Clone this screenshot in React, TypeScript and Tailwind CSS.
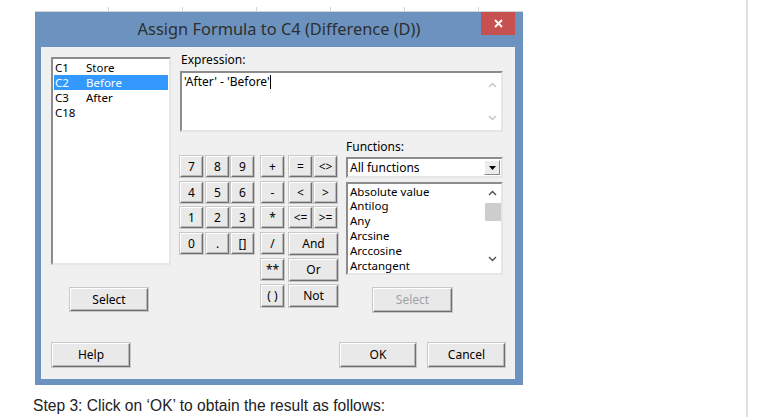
import React from 'react';

const ui = { fontFamily: '"Noto Sans", "Open Sans", sans-serif' };

const Btn: React.FC<{ label: string; className?: string; disabled?: boolean }> = ({ label, className = '', disabled }) => (
  <div
    className={`flex items-center justify-center bg-[#e9e9e9] border border-t-white border-l-white border-r-[#6e6e6e] border-b-[#6e6e6e] shadow-[inset_-1px_-1px_0_#b9b9b9,0_0_0_1px_#c8c8c8] text-[12px] leading-none ${
      disabled ? 'text-[#a3a3a3]' : 'text-black'
    } ${className}`}
  >
    {label}
  </div>
);

const Chevron: React.FC<{ up?: boolean; color?: string }> = ({ up, color = '#606060' }) => (
  <svg width="9" height="6" viewBox="0 0 9 6">
    <path d={up ? 'M1 5 L4.5 1.5 L8 5' : 'M1 1 L4.5 4.5 L8 1'} fill="none" stroke={color} strokeWidth="1.4" />
  </svg>
);

const sunken = 'border-2 border-t-[#8c8c8c] border-l-[#8c8c8c] border-r-[#e6e6e6] border-b-[#e6e6e6] bg-white';

export default function App() {
  const columns = [
    ['C1', 'Store'],
    ['C2', 'Before'],
    ['C3', 'After'],
    ['C18', ''],
  ];
  const functions = ['Absolute value', 'Antilog', 'Any', 'Arcsine', 'Arccosine', 'Arctangent'];

  return (
    <div className="w-[761px] h-[417px] bg-white flex overflow-hidden">
      <div className="w-[746px] flex flex-col pl-[33px] pt-[7px]">
        {/* table border above the picture */}
        <div className="ml-[2px] w-[488px] h-[5px] flex border-b border-[#d4d4d4]">
          {[0, 1, 2, 3, 4, 5].map((i) => (
            <div key={i} className="w-[74px] h-full border-r border-[#d4d4d4]" />
          ))}
        </div>

        {/* dialog */}
        <div className="ml-[2px] w-[488px] h-[373px] bg-[#6c93bf] flex flex-col">
          <div className="relative h-[35px] flex items-center justify-center">
            <span className="text-[16.4px] text-[#2e2e2e]" style={ui}>
              Assign Formula to C4 (Difference (D))
            </span>
            <div className="absolute right-[8px] top-0 w-[34px] h-[23px] bg-[#c75050] flex items-center justify-center">
              <svg width="9" height="9" viewBox="0 0 9 9">
                <path d="M1 1 L8 8 M8 1 L1 8" stroke="white" strokeWidth="1.8" />
              </svg>
            </div>
          </div>

          <div className="ml-[6px] w-[474px] h-[332px] bg-[#f0f0f0] flex flex-col text-black" style={ui}>
            <div className="flex">
              {/* left column list */}
              <div className="ml-[10px] mt-[10px] w-[120px] flex flex-col">
                <div className={`${sunken} h-[208px] pt-[1px] pl-px pr-px`}>
                  {columns.map(([c, n], i) => (
                    <div
                      key={c}
                      className={`h-[15px] flex items-center text-[11.5px] leading-none ${
                        i === 1 ? 'bg-[#3399ff] text-white' : ''
                      }`}
                    >
                      <span className="w-[32px] pl-[1px]">{c}</span>
                      <span>{n}</span>
                    </div>
                  ))}
                </div>
                <Btn label="Select" className="mt-[23px] ml-[19px] w-[78px] h-[23px]" />
              </div>

              {/* right area */}
              <div className="ml-[9px] flex flex-col">
                <div className="mt-[7px] h-[17px] text-[12px] leading-none pl-[1px]">Expression:</div>
                <div className={`${sunken} w-[323px] h-[61px] flex`}>
                  <div className="flex-1 pl-[2px] pt-[2px] text-[12px] leading-[14px] flex items-start">
                    <span>'After' - 'Before'</span>
                    <span className="w-px h-[14px] bg-black" />
                  </div>
                  <div className="w-[17px] flex flex-col items-center justify-between py-[9px]">
                    <Chevron up color="#c4c4c4" />
                    <Chevron color="#c4c4c4" />
                  </div>
                </div>

                <div className="flex">
                  {/* calculator pad */}
                  <div className="mt-[24px] w-[166px] grid grid-cols-[26px_25px_30px_28px_25px_24px] grid-rows-[26px_25px_26px_26px_26px_23px]">
                    {['7', '8', '9', '+', '=', '<>', '4', '5', '6', '-', '<', '>', '1', '2', '3', '*', '<=', '>='].map((k, i) => (
                      <Btn key={i} label={k} className="w-[23px] h-[21px]" />
                    ))}
                    <Btn label="0" className="w-[23px] h-[21px]" />
                    <Btn label="." className="w-[23px] h-[21px]" />
                    <Btn label="[]" className="w-[23px] h-[21px]" />
                    <Btn label="/" className="w-[23px] h-[21px]" />
                    <Btn label="And" className="col-span-2 w-[49px] h-[22px]" />
                    <Btn label="**" className="col-start-4 w-[23px] h-[21px] text-[10px]" />
                    <Btn label="Or" className="col-span-2 w-[49px] h-[22px]" />
                    <Btn label="( )" className="col-start-4 w-[23px] h-[22px]" />
                    <Btn label="Not" className="col-span-2 w-[49px] h-[22px]" />
                  </div>

                  {/* functions */}
                  <div className="w-[157px] flex flex-col">
                    <div className="mt-[5px] h-[20px] flex items-center text-[12px] leading-none">Functions:</div>
                    <div className={`${sunken} h-[21px] flex items-center`}>
                      <span className="flex-1 pl-[2px] text-[12px] leading-none">All functions</span>
                      <div className="w-[16px] h-[15px] mr-px bg-[#ececec] border border-t-white border-l-white border-r-[#8a8a8a] border-b-[#8a8a8a] flex items-center justify-center">
                        <svg width="7" height="4" viewBox="0 0 7 4">
                          <path d="M0 0 H7 L3.5 4 Z" fill="black" />
                        </svg>
                      </div>
                    </div>
                    <div className={`${sunken} mt-[4px] h-[93px] flex`}>
                      <div className="flex-1 pl-[2px]">
                        {functions.map((f) => (
                          <div key={f} className="h-[14.8px] flex items-center text-[11.5px] leading-none">
                            {f}
                          </div>
                        ))}
                      </div>
                      <div className="w-[17px] flex flex-col items-center pt-[6px]">
                        <Chevron up color="#505050" />
                        <div className="mt-[7px] w-[16px] h-[18px] bg-[#cdcdcd]" />
                        <div className="mt-[35px]">
                          <Chevron color="#505050" />
                        </div>
                      </div>
                    </div>
                    <Btn label="Select" disabled className="mt-[13px] ml-[27px] w-[79px] h-[24px]" />
                  </div>
                </div>
              </div>
            </div>

            {/* bottom buttons */}
            <div className="mt-[31px] flex">
              <Btn label="Help" className="ml-[11px] w-[78px] h-[24px]" />
              <Btn label="OK" className="ml-[210px] w-[76px] h-[24px]" />
              <Btn label="Cancel" className="ml-[12px] w-[77px] h-[24px]" />
            </div>
          </div>
        </div>

        <div className="mt-[12px] text-[15.6px] leading-[18px] text-[#222]" style={{ fontFamily: '"Liberation Sans", Arial, sans-serif' }}>
          Step 3: Click on ‘OK’ to obtain the result as follows:
        </div>
      </div>
      <div className="w-[2px] h-full bg-[#e2e2e2]" />
    </div>
  );
}
